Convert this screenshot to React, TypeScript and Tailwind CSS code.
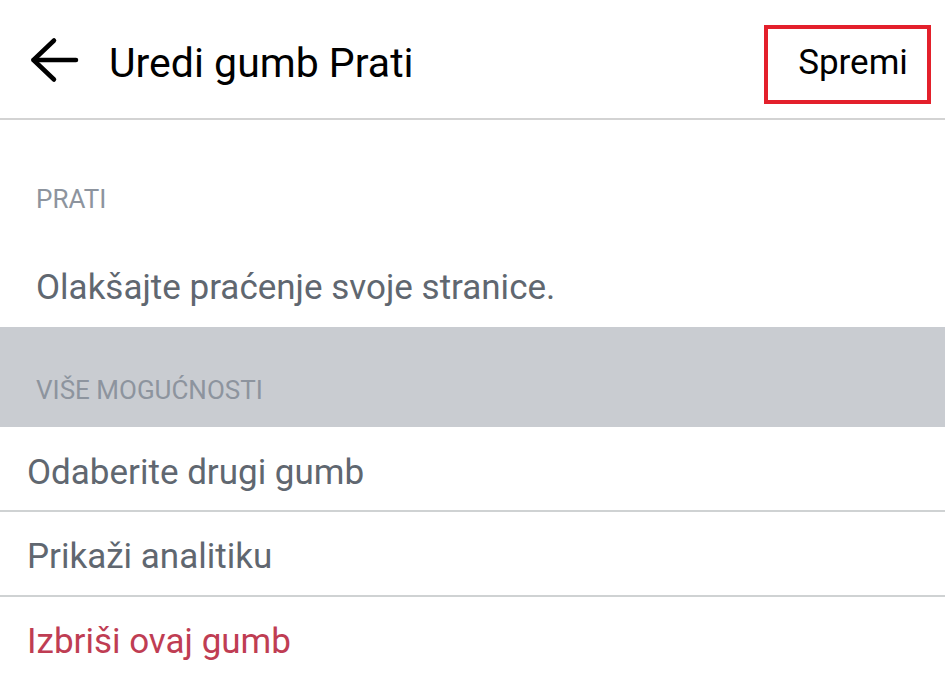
import React from 'react';

const BackArrow: React.FC = () => (
  <svg width="50" height="46" viewBox="0 0 50 46" fill="none" stroke="#000" strokeWidth="4.5" strokeLinecap="round" strokeLinejoin="round">
    <path d="M24 3.5 L3.5 23 L24 42.5" />
    <path d="M3.5 23 H46" />
  </svg>
);

const Row: React.FC<{ label: string; danger?: boolean; last?: boolean; pt: string }> = ({ label, danger, last, pt }) => (
  <div className={`h-[85px] pl-[27px] ${pt} ${last ? '' : 'border-b-2 border-[#cfd2d3]'}`}>
    <div className={`text-[35px] leading-[40px] ${danger ? 'text-[#bf3d53]' : 'text-[#606770]'}`}>{label}</div>
  </div>
);

export default function App() {
  return (
    <div className="w-[945px] h-[683px] overflow-hidden bg-white flex flex-col" style={{ fontFamily: 'Roboto, "Noto Sans", sans-serif' }}>
      {/* Header */}
      <header className="h-[120px] shrink-0 flex border-b-2 border-[#d3d3d3]">
        <div className="ml-[30px] mt-[37px]">
          <BackArrow />
        </div>
        <h1 className="ml-[29px] mt-[40px] text-[41px] leading-[46px] text-black">Uredi gumb Prati</h1>
        <button className="ml-auto mr-[14px] mt-[25px] w-[167px] h-[79px] border-4 border-[#e3202b] pl-[11px] pb-[3px] text-[35px] leading-[40px] text-black flex items-center justify-center">
          Spremi
        </button>
      </header>

      {/* Follow section */}
      <section className="h-[207px] shrink-0 pl-[36px] pt-[64px]">
        <div className="text-[26px] leading-[30px] text-[#8d949e]">PRATI</div>
        <div className="mt-[54px] text-[35px] leading-[40px] text-[#606770]">Olakšajte praćenje svoje stranice.</div>
      </section>

      {/* More options */}
      <div className="h-[100px] shrink-0 bg-[#c9ccd1] pl-[36px] pt-[48px]">
        <div className="text-[26px] leading-[30px] text-[#8d949e]">VIŠE MOGUĆNOSTI</div>
      </div>

      <Row label="Odaberite drugi gumb" pt="pt-[26px]" />
      <Row label="Prikaži analitiku" pt="pt-[25px]" />
      <Row label="Izbriši ovaj gumb" pt="pt-[25px]" danger last />
    </div>
  );
}
